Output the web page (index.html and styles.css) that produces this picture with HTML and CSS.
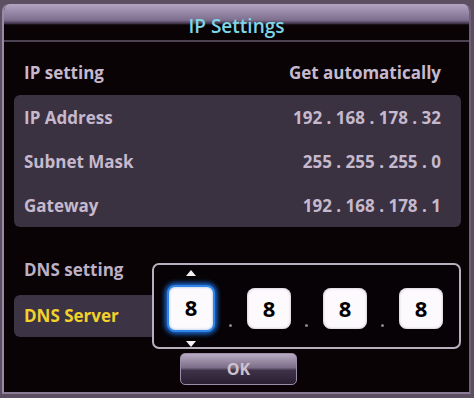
FILE: index.html
```html
<!DOCTYPE html>
<html lang="en">
<head>
  <meta charset="UTF-8">
  <meta name="viewport" content="width=device-width, initial-scale=1.0">
  <title>IP Settings</title>
  <link rel="stylesheet" href="styles.css">
</head>
<body>
  <div class="dialog">
    <!-- Title bar -->
    <div class="header">
      <h1>IP Settings</h1>
    </div>

    <div class="content">
      <div class="row">
        <span>IP setting</span>
        <span>Get automatically</span>
      </div>

      <!-- Address panel -->
      <div class="panel">
        <div class="row">
          <span>IP Address</span>
          <span class="ip">192 . 168 . 178 . 32</span>
        </div>
        <div class="row">
          <span>Subnet Mask</span>
          <span class="ip">255 . 255 . 255 . 0</span>
        </div>
        <div class="row">
          <span>Gateway</span>
          <span class="ip">192 . 168 . 178 . 1</span>
        </div>
      </div>

      <!-- DNS -->
      <div class="dns">
        <div class="dns-labels">
          <div class="dns-setting">DNS setting</div>
          <div class="dns-server">DNS Server</div>
        </div>
        <div class="editor">
          <div class="octet focused">
            <span class="arrow up"></span>
            8
            <span class="arrow down"></span>
          </div>
          <span class="dot"></span>
          <div class="octet">8</div>
          <span class="dot"></span>
          <div class="octet">8</div>
          <span class="dot"></span>
          <div class="octet">8</div>
        </div>
      </div>

      <button class="ok" type="button">OK</button>
    </div>
  </div>
</body>
</html>
```

FILE: styles.css
```css
body {
  margin: 0;
  width: 474px;
  height: 398px;
  background: #5c4f62;
  font-family: "Open Sans", "DejaVu Sans", sans-serif;
  overflow: hidden;
}
.dialog {
  margin: 4px 3px 0 2px;
  height: 388px;
  background: #090306;
  border-left: 2px solid #9a8aa6;
  border-right: 2px solid #6e6078;
  border-bottom: 2px solid #8a7c96;
  border-radius: 7px 7px 0 0;
  overflow: hidden;
}
.header {
  height: 36px;
  background: linear-gradient(#b4a4c4 0, #7e6e8e 45%, #3a2e44 55%, #0a0306 58%, #0a0306 100%);
  border-bottom: 2px solid #4c4252;
}
.header h1 {
  margin: 0;
  padding-top: 10px;
  font-size: 19px;
  font-weight: 600;
  line-height: 24px;
  text-align: center;
  color: #7fd6e6;
}
.content {
  padding: 0 8px 0 10px;
}
.row {
  display: flex;
  justify-content: space-between;
  align-items: center;
  height: 44px;
  padding: 0 20px 0 10px;
  font-size: 17px;
  font-weight: 700;
  color: #c6b9cd;
}
.content > .row {
  margin-top: 8px;
  padding-right: 20px;
}
.panel {
  margin-top: 1px;
  background: #3a3141;
  border-radius: 6px;
}
.dns {
  display: flex;
  margin-top: 27px;
}
.dns-labels {
  width: 140px;
  flex: none;
}
.dns-setting {
  height: 32px;
  line-height: 32px;
  padding-left: 10px;
  font-size: 17px;
  font-weight: 700;
  color: #bcb0c4;
}
.dns-server {
  margin-top: 9px;
  height: 42px;
  line-height: 42px;
  padding-left: 10px;
  background: #3c3345;
  border-radius: 6px 0 0 6px;
  font-size: 17px;
  font-weight: 700;
  color: #f2d22a;
}
.editor {
  margin-top: 9px;
  margin-left: -2px;
  width: 311px;
  height: 86px;
  border: 2px solid #b9b0be;
  border-radius: 7px;
  background: #060205;
  display: flex;
  align-items: center;
  padding: 4px 0 0 13px;
  box-sizing: border-box;
}
.octet {
  position: relative;
  width: 44px;
  height: 41px;
  border-radius: 8px;
  background: #fdfafd;
  color: #000;
  font-size: 22px;
  font-weight: 700;
  line-height: 41px;
  text-align: center;
  box-shadow: inset 0 0 3px #b8b0c0;
}
.octet.focused {
  width: 44px;
  height: 43px;
  border: 2px solid #2f86e6;
  box-shadow: 0 0 5px 2px #1c6fe0, inset 0 0 3px #9ab8e0;
}
.arrow {
  position: absolute;
  left: 50%;
  margin-left: -5px;
  width: 0;
  height: 0;
  border-left: 5px solid transparent;
  border-right: 5px solid transparent;
}
.arrow.up {
  top: -17px;
  border-bottom: 6px solid #f4f0f6;
}
.arrow.down {
  bottom: -17px;
  border-top: 6px solid #f4f0f6;
}
.dot {
  width: 32px;
  height: 41px;
  position: relative;
  flex: none;
}
.dot::after {
  content: "";
  position: absolute;
  left: 14px;
  bottom: 2px;
  width: 3px;
  height: 3px;
  border-radius: 50%;
  background: #8a8290;
}
.ok {
  display: block;
  margin: 4px 0 0 166px;
  width: 117px;
  height: 32px;
  border: 1px solid #9c8ea8;
  border-radius: 5px;
  background: linear-gradient(#b8aac2 0, #7c6e88 45%, #3e3248 55%, #2a2032 100%);
  font-family: "Open Sans", "DejaVu Sans", sans-serif;
  font-size: 16px;
  font-weight: 700;
  color: #cbc2d0;
  padding: 0;
}
```
